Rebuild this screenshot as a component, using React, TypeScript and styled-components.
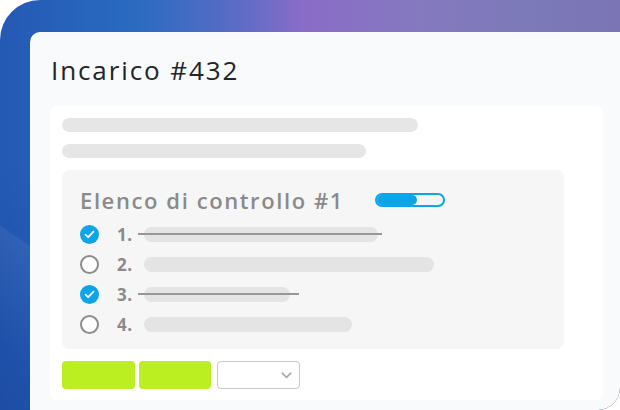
import React from "react";
import styled, { createGlobalStyle } from "styled-components";

const Global = createGlobalStyle`
  html, body { margin: 0; padding: 0; background: #ffffff; }
  body { font-family: "Open Sans", "Noto Sans", sans-serif; }
  * { box-sizing: border-box; }
`;

const Backdrop = styled.div`
  width: 620px;
  height: 410px;
  padding: 32px 0 0 30px;
  border-radius: 40px 0 22px 0;
  overflow: hidden;
  display: flex;
  background:
    linear-gradient(215deg, rgba(255,255,255,0) 78%, rgba(255,255,255,0.06) 78.2%, rgba(255,255,255,0) 92%),
    linear-gradient(180deg, rgba(0,0,0,0) 40%, rgba(10,40,120,0.25) 100%),
    linear-gradient(90deg, #2459b4 0%, #2a6bc0 22%, #5a6cc6 38%, #8a6cc8 49%, #8579c0 68%, #7c7ab8 85%, #7b75b6 100%);
`;

const Card = styled.div`
  flex: 1;
  background: #f8fafc;
  border-radius: 10px 0 22px 0;
  padding: 18px 17px 10px 20px;
  display: flex;
  flex-direction: column;
`;

const Title = styled.h1`
  margin: 0 0 0 1px;
  font-family: "Open Sans", sans-serif;
  font-weight: 400;
  font-size: 26px;
  line-height: 40px;
  letter-spacing: 1.9px;
  color: #222428;
`;

const Panel = styled.div`
  margin-top: 16px;
  background: #ffffff;
  border-radius: 8px;
  padding: 12px 12px 11px 12px;
  display: flex;
  flex-direction: column;
  flex: 1;
`;

const Skeleton = styled.div<{ $w: number }>`
  width: ${(p) => p.$w}px;
  height: 14px;
  border-radius: 7px;
  background: #e6e6e6;
  margin-bottom: 12px;
`;

const Checklist = styled.div`
  width: 502px;
  background: #f6f6f6;
  border-radius: 7px;
  padding: 14px 18px 14px 18px;
  display: flex;
  flex-direction: column;
`;

const HeadRow = styled.div`
  display: flex;
  align-items: center;
  gap: 31px;
  height: 32px;
`;

const Heading = styled.h2`
  margin: 0;
  font-family: "Open Sans", sans-serif;
  font-weight: 600;
  font-size: 22px;
  letter-spacing: 1.6px;
  color: #8a8a8a;
`;

const Progress = styled.div`
  width: 70px;
  height: 14px;
  border: 2px solid #0ba5e8;
  border-radius: 7px;
  overflow: hidden;
  display: flex;
`;

const ProgressFill = styled.div`
  background: #0ba5e8;
  border-radius: 0 5px 5px 0;
`;

const Items = styled.div`
  display: flex;
  flex-direction: column;
  gap: 10.3px;
  margin-top: 8px;
`;

const Item = styled.div`
  display: flex;
  align-items: center;
  height: 20px;
`;

const Check = styled.div<{ $done: boolean }>`
  width: 19px;
  height: 19px;
  border-radius: 50%;
  flex-shrink: 0;
  display: flex;
  align-items: center;
  justify-content: center;
  background: ${(p) => (p.$done ? "#0ba5e8" : "#ffffff")};
  border: ${(p) => (p.$done ? "none" : "2px solid #8c8c8c")};
`;

const Num = styled.span`
  width: 27px;
  margin-left: 18px;
  font-family: "Open Sans", sans-serif;
  font-weight: 700;
  font-size: 17px;
  letter-spacing: 0.6px;
  color: #8a8a8a;
`;

const LineBar = styled.div<{ $w: number; $done: boolean; $over: number }>`
  position: relative;
  width: ${(p) => p.$w}px;
  height: 15px;
  border-radius: 8px;
  background: #e4e4e4;
  &::after {
    content: "";
    display: ${(p) => (p.$done ? "block" : "none")};
    position: absolute;
    left: -6px;
    right: -${(p) => p.$over}px;
    top: 6px;
    height: 2px;
    background: #979797;
  }
`;

const Actions = styled.div`
  margin-top: auto;
  display: flex;
  align-items: center;
  gap: 4px;
`;

const LimeButton = styled.div<{ $w: number }>`
  width: ${(p) => p.$w}px;
  height: 28px;
  border-radius: 4px;
  background: #bcef22;
`;

const Select = styled.div`
  margin-left: 2px;
  width: 83px;
  height: 28px;
  border: 1px solid #c9c9c9;
  border-radius: 4px;
  background: #ffffff;
  display: flex;
  align-items: center;
  justify-content: flex-end;
  padding-right: 7px;
`;

const items = [
  { n: "1.", done: true, w: 234, over: 4 },
  { n: "2.", done: false, w: 290, over: 0 },
  { n: "3.", done: true, w: 146, over: 9 },
  { n: "4.", done: false, w: 208, over: 0 },
];

export default function App() {
  return (
    <>
      <Global />
      <Backdrop>
        <Card>
          <Title>Incarico #432</Title>
          <Panel>
            <Skeleton $w={356} />
            <Skeleton $w={304} />
            <Checklist>
              <HeadRow>
                <Heading>Elenco di controllo #1</Heading>
                <Progress>
                  <ProgressFill style={{ width: "60%" }} />
                </Progress>
              </HeadRow>
              <Items>
                {items.map((it) => (
                  <Item key={it.n}>
                    <Check $done={it.done}>
                      {it.done && (
                        <svg width="11" height="9" viewBox="0 0 11 9">
                          <path d="M1.5 4.6 L4.2 7.2 L9.5 1.6" fill="none" stroke="#fff" strokeWidth="1.8" strokeLinecap="round" strokeLinejoin="round" />
                        </svg>
                      )}
                    </Check>
                    <Num>{it.n}</Num>
                    <LineBar $w={it.w} $done={it.done} $over={it.over} />
                  </Item>
                ))}
              </Items>
            </Checklist>
            <Actions>
              <LimeButton $w={73} />
              <LimeButton $w={72} />
              <Select>
                <svg width="11" height="7" viewBox="0 0 11 7">
                  <path d="M1.2 1.2 L5.5 5.3 L9.8 1.2" fill="none" stroke="#a8a8a8" strokeWidth="1.6" strokeLinecap="round" strokeLinejoin="round" />
                </svg>
              </Select>
            </Actions>
          </Panel>
        </Card>
      </Backdrop>
    </>
  );
}
